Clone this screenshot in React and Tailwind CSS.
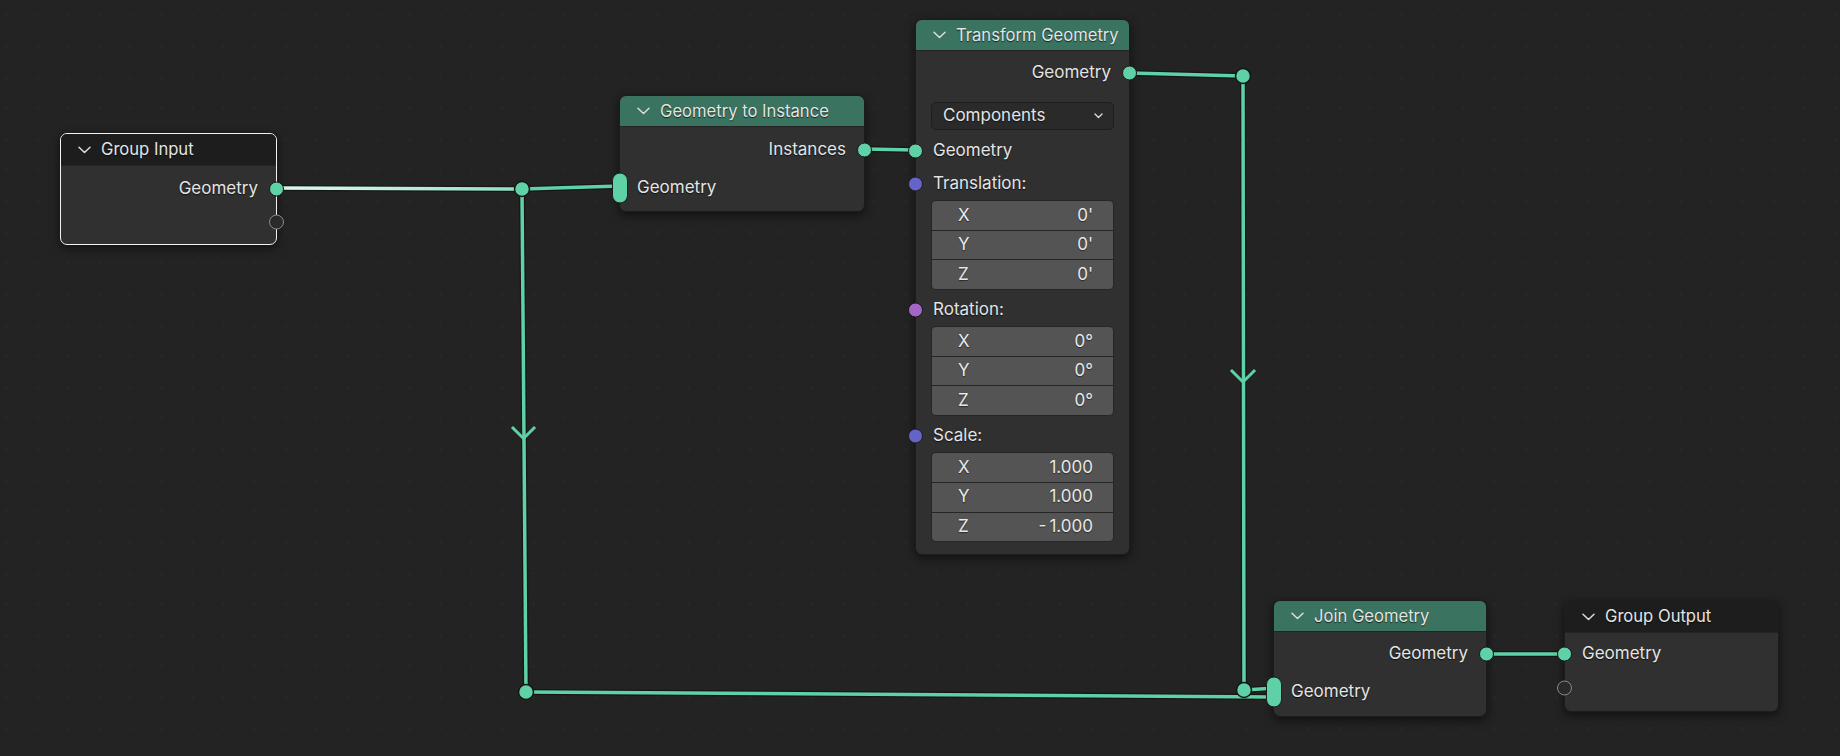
import React from "react";

const GEO = "#5fd1a6";

function Chevron() {
  return (
    <svg width="13" height="8" viewBox="0 0 13 8" className="shrink-0">
      <path d="M1 1.2 L6.5 6.5 L12 1.2" fill="none" stroke="#dcdcdc" strokeWidth="1.5" strokeLinecap="round" strokeLinejoin="round" />
    </svg>
  );
}

function Socket({ color, side, hollow }) {
  const pos = side === "right" ? "right-[-8px]" : "left-[-8px]";
  if (hollow) {
    return (
      <span className={`absolute ${pos} top-1/2 -translate-y-1/2 w-[15px] h-[15px] rounded-full border-[1.5px] border-[#8a8a8a] bg-[#2a2a2a]`} />
    );
  }
  return (
    <span
      className={`absolute ${pos} top-1/2 -translate-y-1/2 w-[15px] h-[15px] rounded-full border-[1.5px] border-[#1b1b1b]`}
      style={{ background: color }}
    />
  );
}

function Pill() {
  return (
    <span className="absolute left-[-8px] top-1/2 -translate-y-1/2 w-[16px] h-[31px] rounded-full border-[1.5px] border-[#1b1b1b] bg-[#5fd1a6]" />
  );
}

function Node({ x, y, w, title, green, selected, headerH, children }) {
  return (
    <div
      className={`absolute flex flex-col rounded-[7px] bg-[#303030] shadow-[0_3px_10px_rgba(0,0,0,0.55)] ${
        selected ? "border-[1.5px] border-[#f2f2f2]" : "border border-[#1c1c1c]"
      }`}
      style={{ left: x, top: y, width: w }}
    >
      <div
        className={`flex items-center gap-[10px] pl-[17px] rounded-t-[6px] border-b border-[#242424] ${
          green ? "bg-[#3a7461]" : "bg-[#1d1d1d]"
        }`}
        style={{ height: headerH }}
      >
        <Chevron />
        <span className="text-[16.6px] text-[#e4e4e4] [text-shadow:0_1px_1px_rgba(0,0,0,0.7)] leading-none">{title}</span>
      </div>
      {children}
    </div>
  );
}

function Row({ h, right, children, className = "" }) {
  return (
    <div
      className={`relative flex items-center text-[17px] text-[#e4e4e4] [text-shadow:0_1px_1px_rgba(0,0,0,0.7)] ${
        right ? "justify-end pr-[18px]" : "pl-[17px]"
      } ${className}`}
      style={{ height: h }}
    >
      {children}
    </div>
  );
}

function VecBox({ rows }) {
  return (
    <div className="mx-[15px] flex flex-col gap-[1px] rounded-[5px] bg-[#262626] p-[1px]">
      {rows.map(([k, v], i) => (
        <div
          key={k}
          className={`flex items-center justify-between h-[28.7px] bg-[#545454] pl-[26px] pr-[20px] text-[17px] text-[#e8e8e8] [text-shadow:0_1px_1px_rgba(0,0,0,0.5)] ${
            i === 0 ? "rounded-t-[4px]" : ""
          } ${i === rows.length - 1 ? "rounded-b-[4px]" : ""}`}
        >
          <span>{k}</span>
          <span>{v}</span>
        </div>
      ))}
    </div>
  );
}

function Wires() {
  const W = ({ d, grad }) => (
    <>
      <path d={d} fill="none" stroke="#161616" strokeWidth="6" strokeLinecap="round" />
      <path d={d} fill="none" stroke={grad ? "url(#hl)" : GEO} strokeWidth="3.5" strokeLinecap="round" />
    </>
  );
  const R = ({ cx, cy }) => <circle cx={cx} cy={cy} r="7.5" fill={GEO} stroke="#161616" strokeWidth="1.5" />;
  return (
    <svg className="absolute inset-0 pointer-events-none" width="1840" height="756">
      <defs>
        <linearGradient id="hl" gradientUnits="userSpaceOnUse" x1="276" y1="0" x2="522" y2="0">
          <stop offset="0" stopColor="#dff7ee" />
          <stop offset="0.6" stopColor="#b4ecd6" />
          <stop offset="1" stopColor="#8fe0c2" />
        </linearGradient>
      </defs>
      <W d="M276 188 L522 189" grad />
      <W d="M522 189 L620 186" />
      <W d="M522 189 L526 692" />
      <W d="M526 692 L1274 697" />
      <W d="M865 149 L915 150" />
      <W d="M1130 73 L1243 76" />
      <W d="M1243 76 L1244 690" />
      <W d="M1244 690 L1274 688" />
      <W d="M1487 654 L1564 654" />
      <path d="M513 428 L523.5 438.5 L534 428" fill="none" stroke={GEO} strokeWidth="3" strokeLinecap="square" />
      <path d="M1232 371 L1243 382 L1254 371" fill="none" stroke={GEO} strokeWidth="3" strokeLinecap="square" />
      <R cx={522} cy={189} />
      <R cx={526} cy={692} />
      <R cx={1243} cy={76} />
      <R cx={1244} cy={690} />
    </svg>
  );
}

export default function App() {
  return (
    <div
      className="relative w-[1840px] h-[756px] overflow-hidden bg-[#232323] bg-[radial-gradient(circle,#272727_1.4px,transparent_1.6px)] bg-[size:31px_31px] bg-[position:-9px_0px]"
      style={{ fontFamily: "Inter, 'Noto Sans', sans-serif" }}
    >
      <Wires />

      <Node x={60} y={133} w={217} title="Group Input" selected headerH={32}>
        <div className="flex flex-col pt-[6px] pb-[6px]">
          <Row h={33} right>
            Geometry
            <Socket color={GEO} side="right" />
          </Row>
          <Row h={33} right>
            <Socket side="right" hollow />
          </Row>
        </div>
      </Node>

      <Node x={619} y={95} w={246} title="Geometry to Instance" green headerH={31}>
        <div className="flex flex-col pt-[6px] pb-[6px] gap-[4px]">
          <Row h={34} right>
            Instances
            <Socket color={GEO} side="right" />
          </Row>
          <Row h={34}>
            Geometry
            <Pill />
          </Row>
        </div>
      </Node>

      <Node x={915} y={19} w={215} title="Transform Geometry" green headerH={31}>
        <div className="flex flex-col pt-[5px] pb-[12px]">
          <Row h={34} right>
            Geometry
            <Socket color={GEO} side="right" />
          </Row>
          <div className="mx-[15px] mt-[12px] h-[28px] flex items-center justify-between rounded-[5px] border border-[#1e1e1e] bg-[#2a2a2a] pl-[11px] pr-[10px] text-[17px] text-[#e4e4e4] [text-shadow:0_1px_1px_rgba(0,0,0,0.6)]">
            <span>Components</span>
            <svg width="9" height="6" viewBox="0 0 9 6">
              <path d="M1 1 L4.5 4.5 L8 1" fill="none" stroke="#dcdcdc" strokeWidth="1.4" strokeLinecap="round" strokeLinejoin="round" />
            </svg>
          </div>
          <Row h={34} className="mt-[4px]">
            Geometry
            <Socket color={GEO} side="left" />
          </Row>
          <Row h={32}>
            Translation:
            <Socket color="#6464c8" side="left" />
          </Row>
          <VecBox rows={[["X", "0'"], ["Y", "0'"], ["Z", "0'"]]} />
          <Row h={32} className="mt-[4px]">
            Rotation:
            <Socket color="#a465c9" side="left" />
          </Row>
          <VecBox rows={[["X", "0°"], ["Y", "0°"], ["Z", "0°"]]} />
          <Row h={32} className="mt-[4px]">
            Scale:
            <Socket color="#6464c8" side="left" />
          </Row>
          <VecBox rows={[["X", "1.000"], ["Y", "1.000"], ["Z", "-\u20091.000"]]} />
        </div>
      </Node>

      <Node x={1273} y={600} w={214} title="Join Geometry" green headerH={31}>
        <div className="flex flex-col pt-[5px] pb-[7px] gap-[4px]">
          <Row h={34} right>
            Geometry
            <Socket color={GEO} side="right" />
          </Row>
          <Row h={34}>
            Geometry
            <Pill />
          </Row>
        </div>
      </Node>

      <Node x={1564} y={600} w={215} title="Group Output" headerH={32}>
        <div className="flex flex-col pt-[4px] pb-[6px]">
          <Row h={34}>
            Geometry
            <Socket color={GEO} side="left" />
          </Row>
          <Row h={34}>
            <Socket side="left" hollow />
          </Row>
        </div>
      </Node>
    </div>
  );
}
